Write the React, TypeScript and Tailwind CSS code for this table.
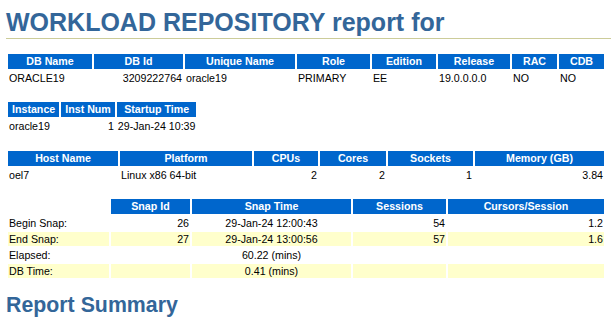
import React from "react";

type CellProps = { children?: React.ReactNode; className?: string };

function Th({ children, className = "" }: CellProps) {
  return (
    <th
      className={
        "bg-[#0066cc] text-white font-bold text-[10.67px] leading-[12px] pt-[1px] pb-[2px] px-[4px] text-center whitespace-nowrap overflow-hidden " +
        className
      }
    >
      {children}
    </th>
  );
}

function Td({ children, className = "" }: CellProps) {
  return (
    <td
      className={
        "text-black font-normal text-[10.67px] leading-[12px] p-[1px] align-top whitespace-nowrap overflow-hidden " +
        className
      }
    >
      {children}
    </td>
  );
}

export default function App() {
  return (
    <div className="min-h-[324px] bg-white pl-[6px] pt-[8px] font-['Liberation_Sans',Arial,Helvetica,sans-serif] text-black">
      <h1 className="text-[25px] font-bold text-[#336699] leading-[29.5px] border-b border-[#cccc99]">
        WORKLOAD REPOSITORY report for
      </h1>

      <table className="table-fixed border-separate border-spacing-[2px] w-[600px] mt-[13.5px]">
        <thead>
          <tr>
            <Th className="w-[84px]">DB Name</Th>
            <Th className="w-[89px]">DB Id</Th>
            <Th className="w-[110px]">Unique Name</Th>
            <Th className="w-[73px]">Role</Th>
            <Th className="w-[64px]">Edition</Th>
            <Th className="w-[72px]">Release</Th>
            <Th className="w-[45px]">RAC</Th>
            <Th className="w-[45px]">CDB</Th>
          </tr>
        </thead>
        <tbody>
          <tr>
            <Td>ORACLE19</Td>
            <Td className="text-right">3209222764</Td>
            <Td>oracle19</Td>
            <Td>PRIMARY</Td>
            <Td>EE</Td>
            <Td>19.0.0.0.0</Td>
            <Td>NO</Td>
            <Td>NO</Td>
          </tr>
        </tbody>
      </table>

      <table className="border-separate border-spacing-[2px] mt-[13.33px]">
        <thead>
          <tr>
            <Th>Instance</Th>
            <Th>Inst Num</Th>
            <Th>Startup Time</Th>
          </tr>
        </thead>
        <tbody>
          <tr>
            <Td>oracle19</Td>
            <Td className="text-right">1</Td>
            <Td>29-Jan-24 10:39</Td>
          </tr>
        </tbody>
      </table>

      <table className="table-fixed border-separate border-spacing-[2px] w-[600px] mt-[13.33px]">
        <thead>
          <tr>
            <Th className="w-[110px]">Host Name</Th>
            <Th className="w-[132px]">Platform</Th>
            <Th className="w-[64px]">CPUs</Th>
            <Th className="w-[66px]">Cores</Th>
            <Th className="w-[85px]">Sockets</Th>
            <Th className="w-[129px]">Memory (GB)</Th>
          </tr>
        </thead>
        <tbody>
          <tr>
            <Td>oel7</Td>
            <Td>Linux x86 64-bit</Td>
            <Td className="text-right">2</Td>
            <Td className="text-right">2</Td>
            <Td className="text-right">1</Td>
            <Td className="text-right">3.84</Td>
          </tr>
        </tbody>
      </table>

      <table className="table-fixed border-separate border-spacing-[2px] w-[600px] mt-[13.33px]">
        <thead>
          <tr>
            <th className="w-[101px] bg-white p-0"></th>
            <Th className="w-[79px]">Snap Id</Th>
            <Th className="w-[159px]">Snap Time</Th>
            <Th className="w-[93px]">Sessions</Th>
            <Th className="w-[156px]">Cursors/Session</Th>
          </tr>
        </thead>
        <tbody>
          <tr>
            <Td className="bg-white">Begin Snap:</Td>
            <Td className="bg-white text-right">26</Td>
            <Td className="bg-white text-center">29-Jan-24 12:00:43</Td>
            <Td className="bg-white text-right">54</Td>
            <Td className="bg-white text-right">1.2</Td>
          </tr>
          <tr>
            <Td className="bg-[#ffffcc]">End Snap:</Td>
            <Td className="bg-[#ffffcc] text-right">27</Td>
            <Td className="bg-[#ffffcc] text-center">29-Jan-24 13:00:56</Td>
            <Td className="bg-[#ffffcc] text-right">57</Td>
            <Td className="bg-[#ffffcc] text-right">1.6</Td>
          </tr>
          <tr>
            <Td className="bg-white">Elapsed:</Td>
            <Td className="bg-white"></Td>
            <Td className="bg-white text-center">60.22 (mins)</Td>
            <Td className="bg-white"></Td>
            <Td className="bg-white"></Td>
          </tr>
          <tr>
            <Td className="bg-[#ffffcc]">DB Time:</Td>
            <Td className="bg-[#ffffcc]"></Td>
            <Td className="bg-[#ffffcc] text-center">0.41 (mins)</Td>
            <Td className="bg-[#ffffcc]"></Td>
            <Td className="bg-[#ffffcc]"></Td>
          </tr>
        </tbody>
      </table>

      <h2 className="text-[21.33px] font-bold text-[#336699] leading-[24.5px] mt-[13.5px]">
        Report Summary
      </h2>
    </div>
  );
}
